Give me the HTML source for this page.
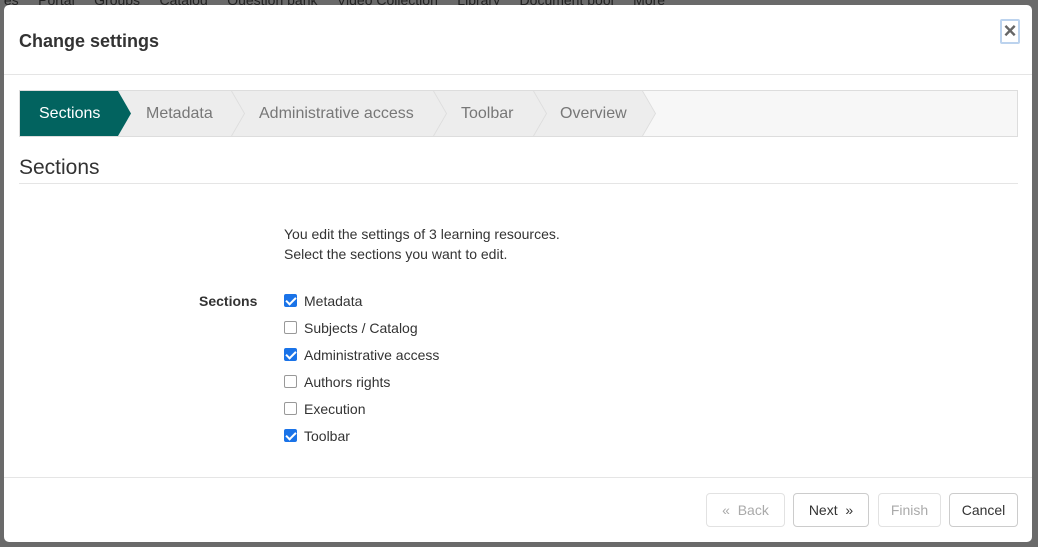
<!DOCTYPE html>
<html><head><meta charset="utf-8"><style>
*{box-sizing:border-box}
body{margin:0;width:1038px;height:547px;background:#6a6a6a;font-family:"Liberation Sans",Arial,sans-serif;position:relative;overflow:hidden;color:#333}
.topbar{position:absolute;top:-8px;left:0;width:1038px;height:14px;color:#222;font-size:14px;white-space:nowrap}
.modal{position:absolute;left:4px;top:5px;width:1028px;height:537px;background:#fff;border-radius:5px}
.title{position:absolute;left:15px;top:26px;font-size:18px;font-weight:bold;color:#333}
.close{position:absolute;left:996px;top:14px;width:20px;height:25px;border:2px solid #bcd3ee;border-radius:2px;color:#666;font-size:22px;font-weight:bold;text-align:center;line-height:20px}
.hr1{position:absolute;left:0;top:69px;width:1028px;border-top:1px solid #e5e5e5}
.wiz{position:absolute;left:15px;top:85px;width:999px;height:47px;background:#f7f7f7;border:1px solid #ddd;overflow:hidden}
.st{position:absolute;top:0;height:45px;line-height:45px;font-size:16px;color:#777;background:#ededed}
.st span{position:absolute;top:0}
.h2{position:absolute;left:15px;top:151px;font-size:21px;color:#333}
.hr2{position:absolute;left:15px;top:178px;width:999px;border-top:1px solid #e5e5e5}
.txt{position:absolute;left:280px;font-size:14px;color:#333}
.cb{position:absolute;left:280px;width:13px;height:13px;border:1px solid #999;border-radius:2px;background:#fff}
.cb.on{background:#1a73e8;border-color:#1a73e8}
.cb.on:after{content:"";position:absolute;left:3px;top:0px;width:4px;height:8px;border:solid #fff;border-width:0 2px 2px 0;transform:rotate(45deg)}
.lab{position:absolute;left:300px;font-size:14px;color:#333}
.hr3{position:absolute;left:0;top:472px;width:1028px;border-top:1px solid #e5e5e5}
.btn{position:absolute;top:488px;height:34px;border:1px solid #ccc;border-radius:4px;font-size:14px;line-height:32px;text-align:center;color:#333;background:#fff}
.dis{color:#aaa;border-color:#e2e2e2}
</style></head><body>
<div class="topbar">&nbsp;es&nbsp;&nbsp;&nbsp;&nbsp;&nbsp;Portal&nbsp;&nbsp;&nbsp;&nbsp;&nbsp;Groups&nbsp;&nbsp;&nbsp;&nbsp;&nbsp;Catalog&nbsp;&nbsp;&nbsp;&nbsp;&nbsp;Question bank&nbsp;&nbsp;&nbsp;&nbsp;&nbsp;Video Collection&nbsp;&nbsp;&nbsp;&nbsp;&nbsp;Library&nbsp;&nbsp;&nbsp;&nbsp;&nbsp;Document pool&nbsp;&nbsp;&nbsp;&nbsp;&nbsp;More</div>
<div class="modal">
<div class="title">Change settings</div>
<div class="close">×</div>
<div class="hr1"></div>
<div class="wiz">
 <div class="st" style="left:0;width:640px;background:#ddd;clip-path:polygon(0 0,623px 0,636px 50%,623px 100%,0 100%)"></div>
 <div class="st" style="left:0;width:640px;clip-path:polygon(0 0,622px 0,635px 50%,622px 100%,0 100%)"></div>
 <div class="st" style="left:0;width:530px;background:#ddd;clip-path:polygon(0 0,514px 0,527px 50%,514px 100%,0 100%)"></div>
 <div class="st" style="left:0;width:530px;clip-path:polygon(0 0,513px 0,526px 50%,513px 100%,0 100%)"></div>
 <div class="st" style="left:0;width:430px;background:#ddd;clip-path:polygon(0 0,414px 0,427px 50%,414px 100%,0 100%)"></div>
 <div class="st" style="left:0;width:430px;clip-path:polygon(0 0,413px 0,426px 50%,413px 100%,0 100%)"></div>
 <div class="st" style="left:0;width:230px;background:#ddd;clip-path:polygon(0 0,212px 0,225px 50%,212px 100%,0 100%)"></div>
 <div class="st" style="left:0;width:230px;clip-path:polygon(0 0,211px 0,224px 50%,211px 100%,0 100%)"></div>
 <div class="st" style="left:0;width:112px;background:#02635f;clip-path:polygon(0 0,98px 0,111px 50%,98px 100%,0 100%)"></div>
 <div class="st" style="left:0;width:700px;background:transparent">
  <span style="left:19px;color:#fff">Sections</span>
  <span style="left:126px">Metadata</span>
  <span style="left:239px">Administrative access</span>
  <span style="left:441px">Toolbar</span>
  <span style="left:540px">Overview</span>
 </div>
</div>
<div class="h2">Sections</div>
<div class="hr2"></div>
<div class="txt" style="top:221px">You edit the settings of 3 learning resources.</div>
<div class="txt" style="top:241px">Select the sections you want to edit.</div>
<div class="txt" style="left:195px;top:288px;font-weight:bold">Sections</div>
<div class="cb on" style="top:289px"></div><div class="lab" style="top:288px">Metadata</div>
<div class="cb" style="top:316px"></div><div class="lab" style="top:315px">Subjects / Catalog</div>
<div class="cb on" style="top:343px"></div><div class="lab" style="top:342px">Administrative access</div>
<div class="cb" style="top:370px"></div><div class="lab" style="top:369px">Authors rights</div>
<div class="cb" style="top:397px"></div><div class="lab" style="top:396px">Execution</div>
<div class="cb on" style="top:424px"></div><div class="lab" style="top:423px">Toolbar</div>
<div class="hr3"></div>
<div class="btn dis" style="left:702px;width:79px">«&nbsp; Back</div>
<div class="btn" style="left:789px;width:76px">Next &nbsp;»</div>
<div class="btn dis" style="left:874px;width:63px">Finish</div>
<div class="btn" style="left:945px;width:69px">Cancel</div>
</div>
</body></html>
